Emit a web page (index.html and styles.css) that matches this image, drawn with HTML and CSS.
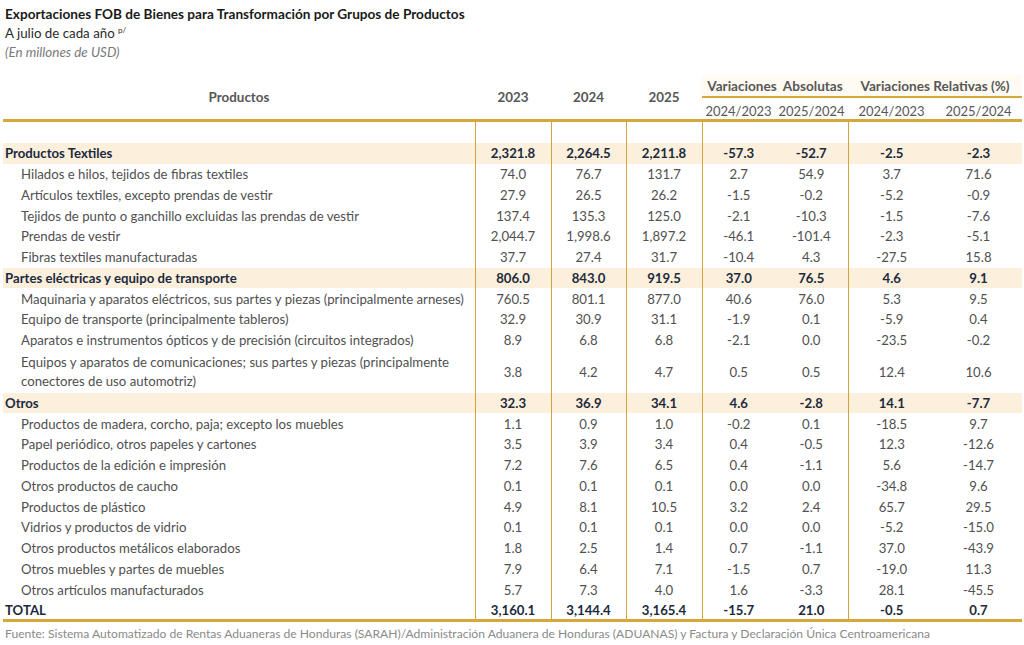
FILE: index.html
```html
<!DOCTYPE html>
<html lang="es">
<head>
<meta charset="utf-8">
<title>Exportaciones FOB de Bienes para Transformación</title>
<link rel="stylesheet" href="styles.css">
</head>
<body>
<div class="page">
  <div class="heading">
    <div class="title">Exportaciones FOB de Bienes para Transformación por Grupos de Productos</div>
    <div class="subtitle">A julio de cada año <sup>p/</sup></div>
    <div class="units">(En millones de USD)</div>
  </div>
  <table class="data">
    <colgroup>
      <col class="c-label"><col class="c-year"><col class="c-year2"><col class="c-year">
      <col class="c-abs"><col class="c-abs"><col class="c-rel"><col class="c-rel">
    </colgroup>
    <thead>
      <tr class="h1">
        <th rowspan="2" class="h-prod">Productos</th>
        <th rowspan="2" class="h-year">2023</th>
        <th rowspan="2" class="h-year">2024</th>
        <th rowspan="2" class="h-year">2025</th>
        <th colspan="2" class="h-group">Variaciones&nbsp; Absolutas</th>
        <th colspan="2" class="h-group">Variaciones Relativas (%)</th>
      </tr>
      <tr class="h2">
        <th class="h-sub">2024/2023</th>
        <th class="h-sub">2025/2024</th>
        <th class="h-sub">2024/2023</th>
        <th class="h-sub">2025/2024</th>
      </tr>
    </thead>
    <tbody>
      <tr class="spacer"><td></td><td class="v"></td><td class="v"></td><td class="v"></td><td class="v"></td><td></td><td class="v"></td><td></td></tr>
      <tr class="group"><td class="lbl">Productos Textiles</td><td class="v">2,321.8</td><td class="v">2,264.5</td><td class="v">2,211.8</td><td class="v">-57.3</td><td>-52.7</td><td class="v">-2.5</td><td>-2.3</td></tr>
      <tr><td class="lbl sub">Hilados e hilos, tejidos de fibras textiles</td><td class="v">74.0</td><td class="v">76.7</td><td class="v">131.7</td><td class="v">2.7</td><td>54.9</td><td class="v">3.7</td><td>71.6</td></tr>
      <tr><td class="lbl sub">Artículos textiles, excepto prendas de vestir</td><td class="v">27.9</td><td class="v">26.5</td><td class="v">26.2</td><td class="v">-1.5</td><td>-0.2</td><td class="v">-5.2</td><td>-0.9</td></tr>
      <tr><td class="lbl sub">Tejidos de punto o ganchillo excluidas las prendas de vestir</td><td class="v">137.4</td><td class="v">135.3</td><td class="v">125.0</td><td class="v">-2.1</td><td>-10.3</td><td class="v">-1.5</td><td>-7.6</td></tr>
      <tr><td class="lbl sub">Prendas de vestir</td><td class="v">2,044.7</td><td class="v">1,998.6</td><td class="v">1,897.2</td><td class="v">-46.1</td><td>-101.4</td><td class="v">-2.3</td><td>-5.1</td></tr>
      <tr><td class="lbl sub">Fibras textiles manufacturadas</td><td class="v">37.7</td><td class="v">27.4</td><td class="v">31.7</td><td class="v">-10.4</td><td>4.3</td><td class="v">-27.5</td><td>15.8</td></tr>
      <tr class="group"><td class="lbl">Partes eléctricas y equipo de transporte</td><td class="v">806.0</td><td class="v">843.0</td><td class="v">919.5</td><td class="v">37.0</td><td>76.5</td><td class="v">4.6</td><td>9.1</td></tr>
      <tr><td class="lbl sub">Maquinaria y aparatos eléctricos, sus partes y piezas (principalmente arneses)</td><td class="v">760.5</td><td class="v">801.1</td><td class="v">877.0</td><td class="v">40.6</td><td>76.0</td><td class="v">5.3</td><td>9.5</td></tr>
      <tr><td class="lbl sub">Equipo de transporte (principalmente tableros)</td><td class="v">32.9</td><td class="v">30.9</td><td class="v">31.1</td><td class="v">-1.9</td><td>0.1</td><td class="v">-5.9</td><td>0.4</td></tr>
      <tr><td class="lbl sub">Aparatos e instrumentos ópticos y de precisión (circuitos integrados)</td><td class="v">8.9</td><td class="v">6.8</td><td class="v">6.8</td><td class="v">-2.1</td><td>0.0</td><td class="v">-23.5</td><td>-0.2</td></tr>
      <tr class="double"><td class="lbl sub">Equipos y aparatos de comunicaciones; sus partes y piezas (principalmente conectores de uso automotriz)</td><td class="v">3.8</td><td class="v">4.2</td><td class="v">4.7</td><td class="v">0.5</td><td>0.5</td><td class="v">12.4</td><td>10.6</td></tr>
      <tr class="group"><td class="lbl">Otros</td><td class="v">32.3</td><td class="v">36.9</td><td class="v">34.1</td><td class="v">4.6</td><td>-2.8</td><td class="v">14.1</td><td>-7.7</td></tr>
      <tr><td class="lbl sub">Productos de madera, corcho, paja; excepto los muebles</td><td class="v">1.1</td><td class="v">0.9</td><td class="v">1.0</td><td class="v">-0.2</td><td>0.1</td><td class="v">-18.5</td><td>9.7</td></tr>
      <tr><td class="lbl sub">Papel periódico, otros papeles y cartones</td><td class="v">3.5</td><td class="v">3.9</td><td class="v">3.4</td><td class="v">0.4</td><td>-0.5</td><td class="v">12.3</td><td>-12.6</td></tr>
      <tr><td class="lbl sub">Productos de la edición e impresión</td><td class="v">7.2</td><td class="v">7.6</td><td class="v">6.5</td><td class="v">0.4</td><td>-1.1</td><td class="v">5.6</td><td>-14.7</td></tr>
      <tr><td class="lbl sub">Otros productos de caucho</td><td class="v">0.1</td><td class="v">0.1</td><td class="v">0.1</td><td class="v">0.0</td><td>0.0</td><td class="v">-34.8</td><td>9.6</td></tr>
      <tr><td class="lbl sub">Productos de plástico</td><td class="v">4.9</td><td class="v">8.1</td><td class="v">10.5</td><td class="v">3.2</td><td>2.4</td><td class="v">65.7</td><td>29.5</td></tr>
      <tr><td class="lbl sub">Vidrios y productos de vidrio</td><td class="v">0.1</td><td class="v">0.1</td><td class="v">0.1</td><td class="v">0.0</td><td>0.0</td><td class="v">-5.2</td><td>-15.0</td></tr>
      <tr><td class="lbl sub">Otros productos metálicos elaborados</td><td class="v">1.8</td><td class="v">2.5</td><td class="v">1.4</td><td class="v">0.7</td><td>-1.1</td><td class="v">37.0</td><td>-43.9</td></tr>
      <tr><td class="lbl sub">Otros muebles y partes de muebles</td><td class="v">7.9</td><td class="v">6.4</td><td class="v">7.1</td><td class="v">-1.5</td><td>0.7</td><td class="v">-19.0</td><td>11.3</td></tr>
      <tr><td class="lbl sub">Otros artículos manufacturados</td><td class="v">5.7</td><td class="v">7.3</td><td class="v">4.0</td><td class="v">1.6</td><td>-3.3</td><td class="v">28.1</td><td>-45.5</td></tr>
      <tr class="total"><td class="lbl">TOTAL</td><td class="v">3,160.1</td><td class="v">3,144.4</td><td class="v">3,165.4</td><td class="v">-15.7</td><td>21.0</td><td class="v">-0.5</td><td>0.7</td></tr>
    </tbody>
  </table>
  <div class="source">Fuente: Sistema Automatizado de Rentas Aduaneras de Honduras (SARAH)/Administración Aduanera de Honduras (ADUANAS) y Factura y Declaración Única Centroamericana</div>
</div>
</body>
</html>
```

FILE: styles.css
```css
html, body {
  margin: 0;
  padding: 0;
  background: #ffffff;
}

.page {
  width: 1019px;
  padding: 5px 2px 0 3px;
  font-family: "Lato", "Noto Sans", sans-serif;
  color: #505050;
}

.heading {
  padding-left: 2px;
}

.title {
  font-size: 13.6px;
  font-weight: 700;
  color: #1a1a1a;
  line-height: 18px;
}

.subtitle {
  font-size: 13.3px;
  color: #2a2a2a;
  line-height: 20px;
}

.subtitle sup {
  font-size: 8px;
  vertical-align: 5px;
  line-height: 0;
}

.units {
  font-size: 13.4px;
  font-style: italic;
  color: #7a7a7a;
  line-height: 18px;
}

.data {
  margin-top: 14px;
  border-collapse: collapse;
  table-layout: fixed;
  width: 1019px;
  font-size: 13.2px;
}

.c-label { width: 472px; }
.c-year { width: 76px; }
.c-year2 { width: 75px; }
.c-abs { width: 73px; }
.c-rel { width: 87px; }

.data th {
  padding: 0;
  font-weight: 700;
  color: #575757;
  text-align: center;
  vertical-align: middle;
}

.h1 th {
  height: 19px;
}

.h-prod, .h-year {
  border-bottom: 3px solid #d6a73a;
  font-size: 13.4px;
  padding-top: 3px;
}

.h-group {
  font-size: 13.6px;
  border-bottom: 2px solid #d6a73a;
  background: #fffbf3;
  white-space: nowrap;
  vertical-align: bottom !important;
  line-height: 16px;
  padding-bottom: 2px !important;
}

.h-sub {
  font-weight: 400 !important;
  border-bottom: 3px solid #d6a73a;
  height: 21px;
  font-size: 13px;
  vertical-align: bottom !important;
  line-height: 16px;
}

.data td {
  padding: 0;
  height: 20.75px;
  text-align: center;
  vertical-align: middle;
  line-height: 16px;
  white-space: nowrap;
}

.data td.v {
  border-left: 1.5px solid #d2a43c;
}

.spacer td {
  height: 21px;
}

.data td.lbl {
  text-align: left;
  padding-left: 2px;
}

.data td.sub {
  padding-left: 18px;
}

.double td.lbl {
  white-space: normal;
  line-height: 19px;
  height: 42px;
  padding-right: 10px;
}

.group td {
  background: #fcf0dd;
  font-weight: 700;
  color: #1c2a3e;
}

.total td {
  font-weight: 700;
  color: #1c2a3e;
  border-bottom: 3px solid #d6a73a;
  height: 19px;
}

.source {
  margin-top: 4px;
  font-size: 12.1px;
  color: #8a8a8a;
  padding-left: 2px;
  line-height: 16px;
}
```
